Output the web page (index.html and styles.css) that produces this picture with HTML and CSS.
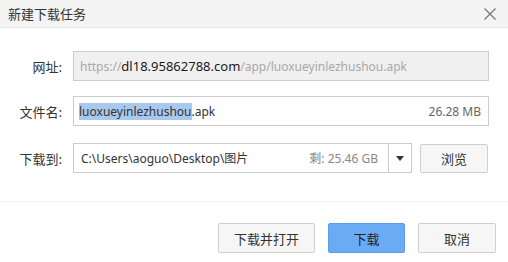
FILE: index.html
```html
<!DOCTYPE html>
<html>
<head>
<meta charset="utf-8">
<link rel="stylesheet" href="styles.css">
</head>
<body>
<div class="dialog">
  <div class="titlebar">
    <span class="title">新建下载任务</span>
    <svg class="close" width="14" height="14" viewBox="0 0 14 14"><path d="M1.5 1.5 L12.5 12.5 M12.5 1.5 L1.5 12.5" stroke="#777" stroke-width="1.3" fill="none"/></svg>
  </div>
  <div class="form">
    <div class="row r1">
      <span class="label">网址:</span>
      <div class="field url"><span class="dim">https://</span><span class="host">dl18.95862788.com</span><span class="dim">/app/luoxueyinlezhushou.apk</span></div>
    </div>
    <div class="row r2">
      <span class="label">文件名:</span>
      <div class="field name"><span class="sel">luoxueyinlezhushou</span><span>.apk</span><span class="size">26.28 MB</span></div>
    </div>
    <div class="row r3">
      <span class="label">下载到:</span>
      <div class="field path"><span class="ptext">C:\Users\aoguo\Desktop\图片</span><span class="free">剩: 25.46 GB</span><span class="drop"><svg width="8" height="5" viewBox="0 0 8 5"><path d="M0 0 H8 L4 5 Z" fill="#333"/></svg></span></div>
      <button class="btn browse">浏览</button>
    </div>
  </div>
  <div class="footer">
    <button class="btn open">下载并打开</button>
    <button class="btn primary">下载</button>
    <button class="btn cancel">取消</button>
  </div>
</div>
</body>
</html>
```
FILE: styles.css
```css
html, body { margin: 0; padding: 0; background: #fff; }
body {
  font-family: "Noto Sans", "Noto Sans CJK SC", sans-serif;
  font-size: 13px;
  color: #333;
  width: 508px;
  height: 262px;
  overflow: hidden;
}
.dialog { width: 508px; height: 262px; display: flex; flex-direction: column; }
.titlebar {
  height: 27px;
  background: #f4f4f4;
  border-bottom: 1px solid #e8e8e8;
  display: flex;
  align-items: center;
  justify-content: space-between;
  padding: 0 11px 0 8px;
  box-sizing: content-box;
  flex: none;
}
.title { font-family: "Noto Sans CJK SC", sans-serif; font-size: 13px; color: #333; }
.close { display: block; }
.form { padding: 23px 0 0 0; height: 174px; border-bottom: 1px solid #efefef; box-sizing: border-box; flex: none; }
.row { display: flex; align-items: center; height: 30px; }
.r2 { margin-top: 15px; }
.r3 { margin-top: 17px; }
.label {
  width: 62px;
  text-align: right;
  padding-right: 11px;
  font-family: "Noto Sans CJK SC", sans-serif;
  font-size: 13px;
  color: #333;
}
.field {
  box-sizing: border-box;
  height: 30px;
  border: 1px solid #cbcbcb;
  display: flex;
  align-items: center;
  padding-left: 6px;
  white-space: nowrap;
  overflow: hidden;
  font-size: 12px;
}
.url { width: 416px; background: #f0f0f0; }
.url .dim { color: #a8a8a8; }
.url .host { color: #1a1a1a; font-size: 13px; }
.name { width: 416px; background: #fff; padding-left: 5px; padding-right: 7px; }
.name .sel { background: #a9c8ee; color: #333; }
.name .size { margin-left: auto; color: #666; }
.path { width: 339px; padding-left: 7px; padding-right: 0; }
.free { margin-left: auto; color: #888; padding-right: 10px; }
.drop {
  width: 22px;
  height: 28px;
  border-left: 1px solid #cbcbcb;
  display: flex;
  align-items: center;
  justify-content: center;
}
.drop svg { display: block; }
.btn {
  box-sizing: border-box;
  height: 30px;
  border: 1px solid #cfcfcf;
  background: #f6f6f6;
  font-family: "Noto Sans CJK SC", sans-serif;
  font-size: 13px;
  color: #333;
  padding: 0;
  border-radius: 2px;
}
.browse { margin-left: 8px; width: 68px; height: 29px; }
.footer {
  display: flex;
  justify-content: flex-end;
  gap: 13px;
  padding: 21px 12px 0 0;
}
.open { width: 97px; }
.primary { width: 77px; background: #6aabf6; border-color: #5c9de6; color: #222; }
.cancel { width: 78px; }
```
